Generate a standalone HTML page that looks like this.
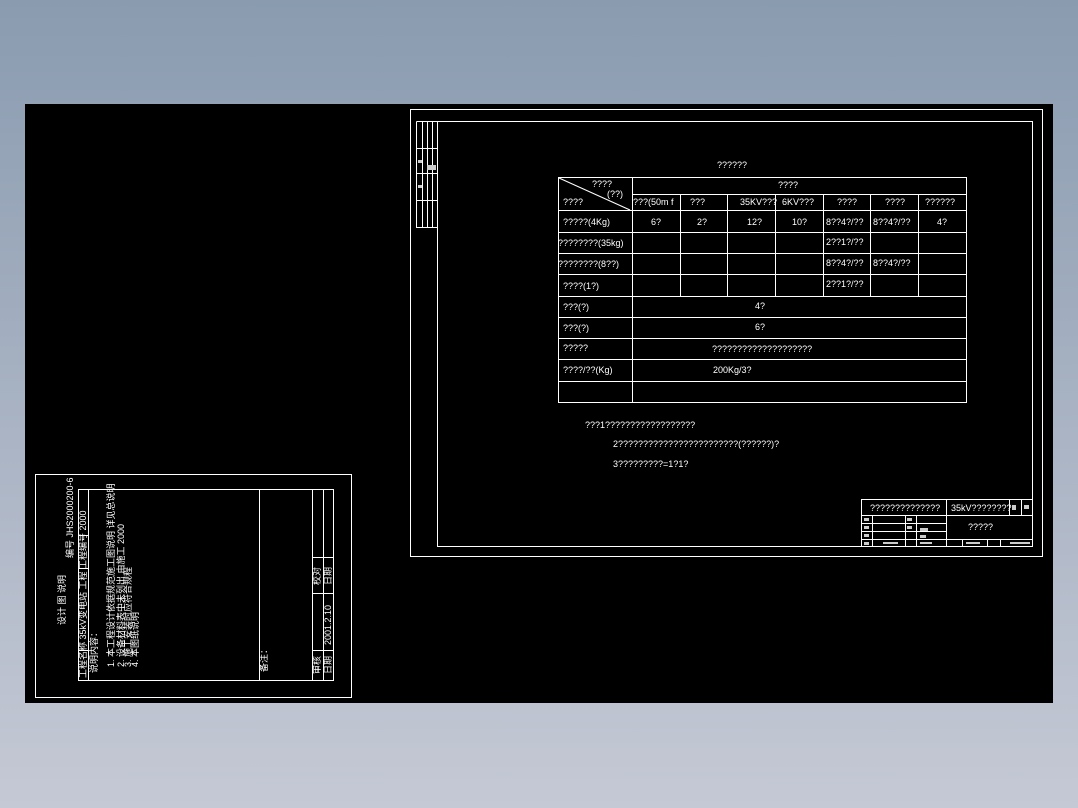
<!DOCTYPE html>
<html><head><meta charset="utf-8">
<style>
html,body{margin:0;padding:0;width:1078px;height:808px;overflow:hidden;background:linear-gradient(#8a9bb0,#c5c9d5);}
svg{position:absolute;left:0;top:0}
text{font-family:"Liberation Sans","Noto Sans CJK SC",sans-serif;fill:#fff;font-size:9px}
</style></head><body>
<svg width="1078" height="808" viewBox="0 0 1078 808">
<rect x="25" y="104" width="1028" height="599" fill="#000"/>
<g stroke="#fff" fill="none" stroke-width="1">
<rect x="410.5" y="109.5" width="632" height="447"/>
<rect x="437.5" y="121.5" width="595" height="425"/>
<path d="M416.5 121.5V227.5H437.5M422.5 121.5V227.5M427.5 121.5V227.5M432.5 121.5V227.5M416.5 121.5H437.5M416.5 148.5H437.5M416.5 173.5H437.5M416.5 200.5H437.5"/>
<rect x="558.5" y="177.5" width="408" height="225"/>
<path d="M632.5 177.5V402.5M632.5 194.5H966.5M558.5 210.5H966.5M558.5 232.5H966.5M558.5 253.5H966.5M558.5 274.5H966.5M558.5 296.5H966.5M558.5 317.5H966.5M558.5 338.5H966.5M558.5 359.5H966.5M558.5 381.5H966.5"/>
<path d="M680.5 194.5V296.5M727.5 194.5V296.5M775.5 194.5V296.5M823.5 194.5V296.5M870.5 194.5V296.5M918.5 194.5V296.5"/>
<path d="M559 178L630 210"/>
<rect x="861.5" y="499.5" width="171" height="47"/>
<path d="M861.5 515.5H1032.5M861.5 523.5H946.5M861.5 531.5H946.5M861.5 539.5H1032.5M946.5 499.5V546.5M872.5 515.5V546.5M905.5 515.5V546.5M916.5 515.5V546.5M1009.5 499.5V515.5M1021.5 499.5V515.5M962.5 539.5V546.5M987.5 539.5V546.5M1000.5 539.5V546.5"/>
<rect x="35.5" y="474.5" width="316" height="223"/>
<rect x="78.5" y="489.5" width="255" height="191"/>
<path d="M88.5 489.5V680.5M259.5 489.5V680.5M312.5 489.5V680.5M323.5 489.5V680.5M78.5 535.5H88.5M78.5 568.5H88.5M78.5 650.5H88.5M312.5 557.5H333.5M312.5 593.5H333.5M312.5 650.5H333.5"/>
</g>
<text x="717" y="168">??????</text>
<text x="592" y="187" font-size="8">????</text>
<text x="607" y="197" font-size="8">(??)</text>
<text x="563" y="205">????</text>
<text x="778" y="188">????</text>
<text x="633" y="205">???(50m  f</text>
<text x="690" y="205">???</text>
<text x="740" y="205">35KV???</text>
<text x="782" y="205">6KV???</text>
<text x="837" y="205">????</text>
<text x="885" y="205">????</text>
<text x="925" y="205">??????</text>
<text x="563" y="225">?????(4Kg)</text>
<text x="651" y="225">6?</text><text x="697" y="225">2?</text><text x="747" y="225">12?</text><text x="792" y="225">10?</text>
<text x="826" y="225">8??4?/??</text><text x="873" y="225">8??4?/??</text><text x="937" y="225">4?</text>
<text x="558" y="246">????????(35kg)</text><text x="826" y="245">2??1?/??</text>
<text x="558" y="267">????????(8??)</text><text x="826" y="266">8??4?/??</text><text x="873" y="266">8??4?/??</text>
<text x="563" y="289">????(1?)</text><text x="826" y="287">2??1?/??</text>
<text x="563" y="310">???(?)</text><text x="755" y="309">4?</text>
<text x="563" y="331">???(?)</text><text x="755" y="330">6?</text>
<text x="563" y="351">?????</text><text x="712" y="352">????????????????????</text>
<text x="563" y="373">????/??(Kg)</text><text x="713" y="373">200Kg/3?</text>
<text x="585" y="428">???1??????????????????</text>
<text x="613" y="447">2????????????????????????(??????)?</text>
<text x="613" y="467">3?????????=1?1?</text>
<text x="870" y="511" font-size="6">??????????????</text>
<text x="951" y="511" font-size="6">35kV????????</text>
<text x="968" y="530" font-size="6">?????</text>
<g fill="#ccc">
<rect x="864" y="518" width="5" height="3"/><rect x="864" y="526" width="5" height="3"/><rect x="864" y="534" width="5" height="3"/><rect x="864" y="542" width="5" height="3"/>
<rect x="883" y="542" width="15" height="2"/><rect x="920" y="542" width="12" height="2"/><rect x="966" y="542" width="14" height="2"/><rect x="1010" y="542" width="20" height="2"/>
<rect x="907" y="518" width="5" height="3"/><rect x="907" y="526" width="5" height="3"/><rect x="920" y="528" width="8" height="3"/><rect x="920" y="535" width="6" height="3"/>
<rect x="1012" y="505" width="4" height="5"/><rect x="1024" y="505" width="5" height="4"/>
<rect x="418" y="185" width="4" height="3"/><rect x="427" y="165" width="9" height="5"/><rect x="418" y="160" width="4" height="3"/>
</g>
<g transform="translate(65 625) rotate(-90)"><text font-size="9">设计 图 说明</text></g>
<g transform="translate(73 558) rotate(-90)"><text font-size="5">编号 JHS2000200-6</text></g>
<g transform="translate(86 678) rotate(-90)"><text font-size="5">工程名称 35kV变电站 工程 工程编号 2000</text></g>
<g transform="translate(97 673) rotate(-90)"><text font-size="6">说明内容：</text></g>
<g transform="translate(114 667) rotate(-90)"><text font-size="6">1. 本工程设计依据规范施工图说明 详见总说明</text></g>
<g transform="translate(124 667) rotate(-90)"><text font-size="6">2. 设备材料表中未列出 由施工 2000</text></g>
<g transform="translate(131 667) rotate(-90)"><text font-size="6">3. 施工安装时应符合规程</text></g>
<g transform="translate(138 667) rotate(-90)"><text font-size="6">4. 本图纸说明</text></g>
<g transform="translate(267 672) rotate(-90)"><text font-size="6">备注：</text></g>
<g transform="translate(320 674) rotate(-90)"><text font-size="6">审核</text></g>
<g transform="translate(331 674) rotate(-90)"><text font-size="6">日期</text></g>
<g transform="translate(331 645) rotate(-90)"><text font-size="6">2001.2.10</text></g>
<g transform="translate(320 585) rotate(-90)"><text font-size="6">校对</text></g>
<g transform="translate(331 585) rotate(-90)"><text font-size="6">日期</text></g>
</svg>
</body></html>
